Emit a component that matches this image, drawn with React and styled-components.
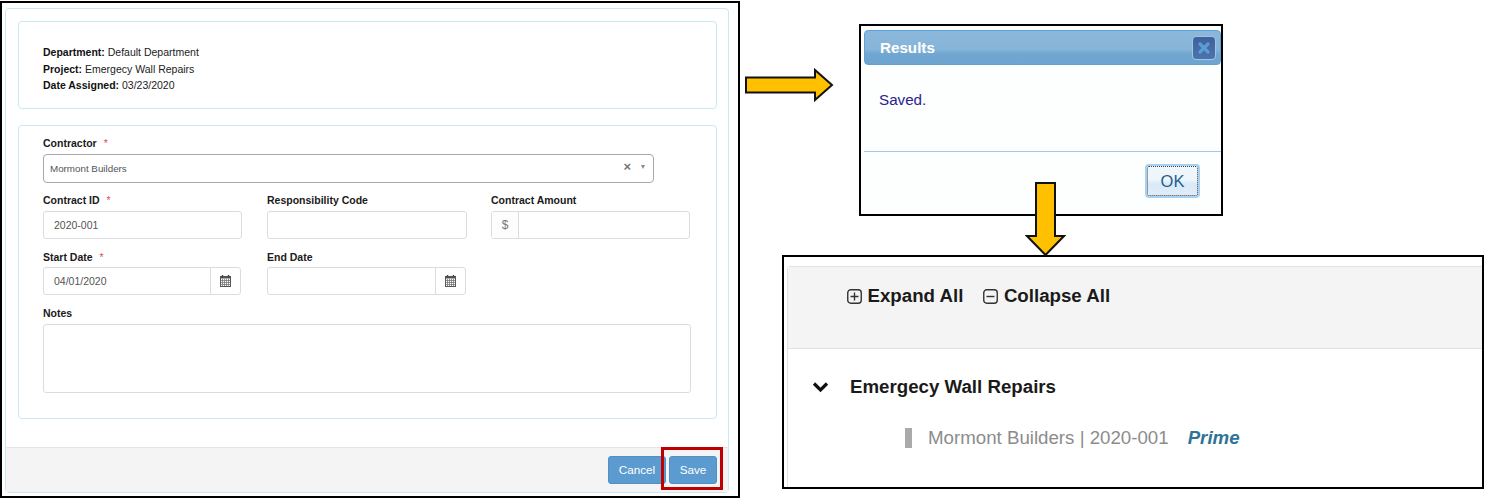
import React from "react";
import styled, { createGlobalStyle } from "styled-components";

const Global = createGlobalStyle`
  html, body { margin: 0; padding: 0; background: #fff; }
  body { font-family: "Liberation Sans", Arial, sans-serif; color: #222; }
  * { box-sizing: border-box; }
`;

const Canvas = styled.div`
  position: relative;
  width: 1488px;
  height: 499px;
  overflow: hidden;
  background: #fff;
`;

/* The three pasted screenshots sit on a free canvas */
const Shot = styled.section`
  position: absolute;
  left: ${(p) => p.$x}px;
  top: ${(p) => p.$y}px;
  width: ${(p) => p.$w}px;
  height: ${(p) => p.$h}px;
  border: 2px solid #000;
  background: #fff;
  overflow: hidden;
`;

/* Left shot: form modal */
const Modal = styled.div`
  display: flex;
  flex-direction: column;
  height: 485px;
  width: 724px;
  margin: 5px 0 0 3px;
  border: 1px solid #c9e8f0;
  border-radius: 4px;
  background: #fff;
`;

const ModalBody = styled.div`
  flex: 1;
  padding: 12px 11px 0 12px;
  display: flex;
  flex-direction: column;
  gap: 16px;
`;

const Card = styled.div`
  border: 1px solid #c9e8f0;
  border-radius: 4px;
  height: ${(p) => p.$h}px;
  padding: ${(p) => p.$pad};
`;

const InfoLine = styled.div`
  font-size: 10.5px;
  line-height: 16.5px;
  color: #222;
  b { font-weight: 700; color: #111; }
`;

const Field = styled.div`
  display: flex;
  flex-direction: column;
  width: ${(p) => p.$w}px;
  margin-right: ${(p) => p.$mr ?? 0}px;
  margin-bottom: ${(p) => p.$mb ?? 0}px;
`;

const Label = styled.div`
  font-size: 10.5px;
  font-weight: 700;
  line-height: 14px;
  height: 14px;
  margin-bottom: ${(p) => p.$mb ?? 4}px;
  color: #1a1a1a;
`;

const Req = styled.span`
  color: #d9534f;
  font-weight: 400;
  margin-left: 7px;
`;

const Row = styled.div`
  display: flex;
`;

const SelectBox = styled.div`
  display: flex;
  align-items: center;
  height: 29px;
  width: 611px;
  padding: 0 6px;
  border: 1px solid #a8a8a8;
  border-radius: 4px;
  font-size: 9.8px;
  color: #555;
`;

const SelectValue = styled.span`
  flex: 1;
`;

const ClearX = styled.span`
  font-size: 13px;
  font-weight: 700;
  color: #777;
  margin-right: 10px;
  line-height: 1;
  margin-top: -4px;
`;

const Caret = styled.span`
  width: 0;
  height: 0;
  border-left: 2.5px solid transparent;
  border-right: 2.5px solid transparent;
  border-top: 4px solid #888;
  margin-right: 2px;
  margin-top: -3px;
`;

const InputGroup = styled.div`
  display: flex;
  height: 28px;
  border: 1px solid #dcdcdc;
  border-radius: 3px;
  font-size: 10.5px;
  color: #555;
  background: #fff;
`;

const InputValue = styled.div`
  flex: 1;
  display: flex;
  align-items: center;
  padding-left: 10px;
`;

const AddonEnd = styled.div`
  width: 30px;
  display: flex;
  align-items: center;
  justify-content: center;
  border-left: 1px solid #dcdcdc;
`;

const AddonStart = styled.div`
  width: 27px;
  display: flex;
  align-items: center;
  justify-content: center;
  border-right: 1px solid #dcdcdc;
  font-size: 12px;
  color: #777;
  background: #fdfdfd;
`;

const TextArea = styled.div`
  width: 648px;
  height: 69px;
  border: 1px solid #dcdcdc;
  border-radius: 3px;
`;

const ModalFooter = styled.div`
  height: 45px;
  margin-top: 28px;
  background: #f4f4f4;
  border-top: 1px solid #e4e4e4;
  display: flex;
  justify-content: flex-end;
  align-items: flex-start;
  gap: 3px;
  padding: 8px 11px 0 0;
`;

const PrimaryButton = styled.div`
  height: 28px;
  width: ${(p) => p.$w}px;
  background: #5b9bd0;
  border: 1px solid #4f90c6;
  border-radius: 3px;
  color: #fff;
  font-size: 11.7px;
  padding-bottom: 2px;
  display: flex;
  align-items: center;
  justify-content: center;
`;

const Highlight = styled.div`
  position: absolute;
  left: ${(p) => p.$x}px;
  top: ${(p) => p.$y}px;
  width: ${(p) => p.$w}px;
  height: ${(p) => p.$h}px;
  border: 3px solid #c00000;
`;

/* Dialog shot */
const Dialog = styled.div`
  display: flex;
  flex-direction: column;
  height: 100%;
  padding: 4px 0 0 3px;
  background: #fdfefe;
`;

const TitleBar = styled.div`
  height: 35px;
  display: flex;
  align-items: center;
  justify-content: space-between;
  padding: 0 4px 0 15px;
  border: 1px solid #5fa2d8;
  border-radius: 4px;
  background: linear-gradient(#8ab7da 0%, #87b5d9 55%, #70a6d0 70%, #6ea5d0 100%);
  color: #fff;
  font-size: 15.2px;
  font-weight: 700;
`;

const CloseBox = styled.div`
  width: 24px;
  height: 24px;
  border: 1px solid #a9c3dc;
  border-radius: 4px;
  background: linear-gradient(#3d629f, #4a74ad);
  display: flex;
  align-items: center;
  justify-content: center;
`;

const DialogMessage = styled.div`
  height: 87px;
  padding: 27px 0 0 15px;
  font-size: 15.2px;
  line-height: 16px;
  color: #2a2290;
  border-bottom: 1px solid #9fcbea;
`;

const DialogActions = styled.div`
  display: flex;
  justify-content: flex-end;
  padding: 12px 21px 0 0;
`;

const OkButton = styled.div`
  width: 55px;
  height: 34px;
  border: 2px solid #a8d0f0;
  border-radius: 4px;
  background: linear-gradient(#f0f7fc 0%, #eef6fb 45%, #d9e9f6 60%, #e0edf8 100%);
  display: flex;
  align-items: center;
  justify-content: center;
  outline: 1px dotted #444;
  outline-offset: -3px;
  color: #1f5f8f;
  font-size: 16.5px;
`;

/* Tree shot */
const TreePanel = styled.div`
  margin: 9px 0 0 3px;
  height: 230px;
  border: 1px solid #e2e2e2;
  border-bottom: 0;
  border-right: 0;
  border-radius: 4px 0 0 0;
`;

const TreeHeader = styled.div`
  height: 82px;
  background: #f4f4f4;
  border-bottom: 1px solid #e0e0e0;
  display: flex;
  align-items: flex-start;
  gap: 20px;
  padding: 18px 0 0 59px;
`;

const TreeAction = styled.div`
  display: flex;
  align-items: center;
  gap: 5.5px;
  font-size: 18.7px;
  font-weight: 700;
  line-height: 22px;
  color: #1a1a1a;
`;

const TreeTitle = styled.div`
  display: flex;
  align-items: center;
  gap: 21px;
  padding: 27px 0 0 24px;
  font-size: 18.7px;
  font-weight: 700;
  line-height: 22px;
  color: #1a1a1a;
`;

const TreeItem = styled.div`
  display: flex;
  align-items: center;
  padding: 29px 0 0 117px;
  font-size: 18.7px;
  line-height: 22px;
  color: #8c8c8c;
`;

const ItemBar = styled.span`
  width: 7px;
  height: 20px;
  background: #aaa;
  margin-right: 16px;
`;

const Prime = styled.span`
  margin-left: 19px;
  font-weight: 700;
  font-style: italic;
  color: #2f7396;
`;

/* Arrows between shots */
const Arrow = styled.svg`
  position: absolute;
  left: ${(p) => p.$x}px;
  top: ${(p) => p.$y}px;
`;

const CalendarIcon = () => (
  <svg width="11" height="12" viewBox="0 0 11 12">
    <rect x="0.5" y="1.5" width="10" height="10" fill="#fff" stroke="#555" />
    <rect x="0.5" y="1.5" width="10" height="2" fill="#555" />
    <path d="M2.5 0v2.5M8.5 0v2.5" stroke="#444" strokeWidth="1.4" />
    <path d="M.5 5.5h10M.5 7.5h10M.5 9.5h10M2.5 4v7M4.5 4v7M6.5 4v7M8.5 4v7" stroke="#777" strokeWidth="0.8" />
  </svg>
);

const SquareIcon = ({ plus }) => (
  <svg width="15" height="15" viewBox="0 0 15 15">
    <rect x="0.75" y="0.75" width="13.5" height="13.5" rx="3" fill="none" stroke="#333" strokeWidth="1.4" />
    <path d={plus ? "M3.5 7.5h8M7.5 3.5v8" : "M3.5 7.5h8"} stroke="#333" strokeWidth="1.4" />
  </svg>
);

export default function App() {
  return (
    <Canvas>
      <Global />

      <Shot $x={0} $y={1} $w={740} $h={497}>
        <Modal>
          <ModalBody>
            <Card $h={88} $pad="22px 24px 0">
              <InfoLine><b>Department:</b> Default Department</InfoLine>
              <InfoLine><b>Project:</b> Emergecy Wall Repairs</InfoLine>
              <InfoLine><b>Date Assigned:</b> 03/23/2020</InfoLine>
            </Card>
            <Card $h={294} $pad="10px 24px 0">
              <Field $w={611} $mb={10}>
                <Label>Contractor<Req>*</Req></Label>
                <SelectBox>
                  <SelectValue>Mormont Builders</SelectValue>
                  <ClearX>×</ClearX>
                  <Caret />
                </SelectBox>
              </Field>
              <Row>
                <Field $w={199} $mr={25} $mb={11}>
                  <Label>Contract ID<Req>*</Req></Label>
                  <InputGroup><InputValue>2020-001</InputValue></InputGroup>
                </Field>
                <Field $w={200} $mr={24} $mb={11}>
                  <Label>Responsibility Code</Label>
                  <InputGroup><InputValue /></InputGroup>
                </Field>
                <Field $w={199} $mb={11}>
                  <Label>Contract Amount</Label>
                  <InputGroup><AddonStart>$</AddonStart><InputValue /></InputGroup>
                </Field>
              </Row>
              <Row>
                <Field $w={198} $mr={26} $mb={11}>
                  <Label $mb={3}>Start Date<Req>*</Req></Label>
                  <InputGroup><InputValue>04/01/2020</InputValue><AddonEnd><CalendarIcon /></AddonEnd></InputGroup>
                </Field>
                <Field $w={199} $mb={11}>
                  <Label $mb={3}>End Date</Label>
                  <InputGroup><InputValue /><AddonEnd><CalendarIcon /></AddonEnd></InputGroup>
                </Field>
              </Row>
              <Field $w={648}>
                <Label>Notes</Label>
                <TextArea />
              </Field>
            </Card>
          </ModalBody>
          <ModalFooter>
            <PrimaryButton $w={58}>Cancel</PrimaryButton>
            <PrimaryButton $w={48}>Save</PrimaryButton>
          </ModalFooter>
        </Modal>
      </Shot>
      <Highlight $x={661} $y={447} $w={62} $h={43} />

      <Shot $x={859} $y={24} $w={364} $h={192}>
        <Dialog>
          <TitleBar>
            Results
            <CloseBox>
              <svg width="12" height="12" viewBox="0 0 12 12">
                <path d="M2 2l8 8M10 2l-8 8" stroke="#5e9bd0" strokeWidth="3.2" strokeLinecap="round" />
              </svg>
            </CloseBox>
          </TitleBar>
          <DialogMessage>Saved.</DialogMessage>
          <DialogActions><OkButton>OK</OkButton></DialogActions>
        </Dialog>
      </Shot>

      <Shot $x={782} $y={255} $w={702} $h={234}>
        <TreePanel>
          <TreeHeader>
            <TreeAction><SquareIcon plus />Expand All</TreeAction>
            <TreeAction><SquareIcon />Collapse All</TreeAction>
          </TreeHeader>
          <TreeTitle>
            <svg width="17" height="12" viewBox="0 0 17 12">
              <path d="M2 2.5l6.5 6.5L15 2.5" fill="none" stroke="#111" strokeWidth="3.2" />
            </svg>
            Emergecy Wall Repairs
          </TreeTitle>
          <TreeItem>
            <ItemBar />
            Mormont Builders | 2020-001
            <Prime>Prime</Prime>
          </TreeItem>
        </TreePanel>
      </Shot>

      <Arrow $x={744} $y={68} width="90" height="34" viewBox="0 0 90 34">
        <path d="M2 9.5h69V2l17 15-17 15v-7.5H2z" fill="#ffc000" stroke="#111" strokeWidth="2" />
      </Arrow>
      <Arrow $x={1025} $y={181} width="41" height="76" viewBox="0 0 41 76">
        <path d="M11 2h19v53h9L20.5 74 2 55h9z" fill="#ffc000" stroke="#111" strokeWidth="2" />
      </Arrow>
    </Canvas>
  );
}
